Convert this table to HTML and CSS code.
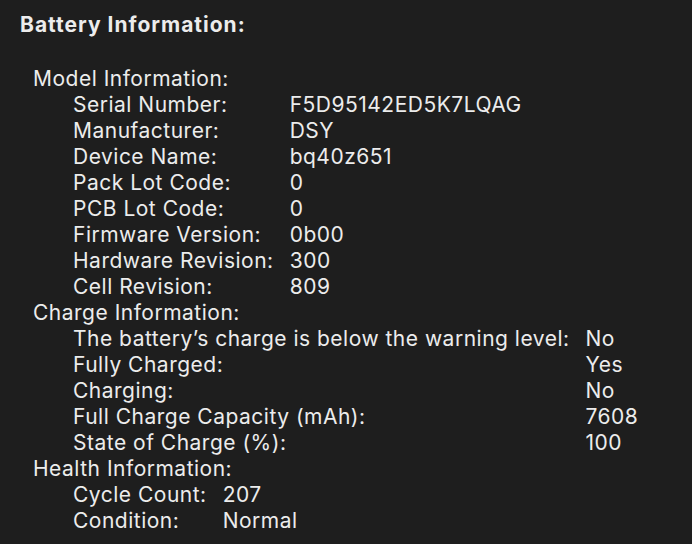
FILE: index.html
```html
<!DOCTYPE html>
<html>
<head>
<meta charset="utf-8">
<link rel="stylesheet" href="styles.css">
</head>
<body>
<div class="page">
  <h1 class="title">Battery Information:</h1>
  <div class="tree">
    <div class="section">
      <div class="heading">Model Information:</div>
      <div class="grid">
        <div class="k">Serial Number:</div><div class="v">F5D95142ED5K7LQAG</div>
        <div class="k">Manufacturer:</div><div class="v">DSY</div>
        <div class="k">Device Name:</div><div class="v">bq40z651</div>
        <div class="k">Pack Lot Code:</div><div class="v">0</div>
        <div class="k">PCB Lot Code:</div><div class="v">0</div>
        <div class="k">Firmware Version:</div><div class="v">0b00</div>
        <div class="k">Hardware Revision:</div><div class="v">300</div>
        <div class="k">Cell Revision:</div><div class="v">809</div>
      </div>
    </div>
    <div class="section">
      <div class="heading">Charge Information:</div>
      <div class="grid">
        <div class="k">The battery’s charge is below the warning level:</div><div class="v">No</div>
        <div class="k">Fully Charged:</div><div class="v">Yes</div>
        <div class="k">Charging:</div><div class="v">No</div>
        <div class="k">Full Charge Capacity (mAh):</div><div class="v">7608</div>
        <div class="k">State of Charge (%):</div><div class="v">100</div>
      </div>
    </div>
    <div class="section">
      <div class="heading">Health Information:</div>
      <div class="grid">
        <div class="k">Cycle Count:</div><div class="v">207</div>
        <div class="k">Condition:</div><div class="v">Normal</div>
      </div>
    </div>
  </div>
</div>
</body>
</html>
```
FILE: styles.css
```css
html, body {
  margin: 0;
  padding: 0;
  background: #1e1e1e;
}
body {
  width: 692px;
  height: 544px;
  overflow: hidden;
  font-family: Inter, "Liberation Sans", sans-serif;
  color: #ececec;
}
.page {
  padding: 12px 0 0 20px;
}
.title {
  margin: 0;
  font-size: 21px;
  font-weight: 700;
  letter-spacing: 1px;
  line-height: 26px;
}
.tree {
  margin-top: 28px;
  padding-left: 13px;
  font-size: 21px;
  letter-spacing: 0.5px;
  line-height: 26px;
}
.grid {
  display: grid;
  grid-template-columns: max-content max-content;
  column-gap: 16px;
  padding-left: 40px;
}
.k, .v {
  white-space: nowrap;
}
```
